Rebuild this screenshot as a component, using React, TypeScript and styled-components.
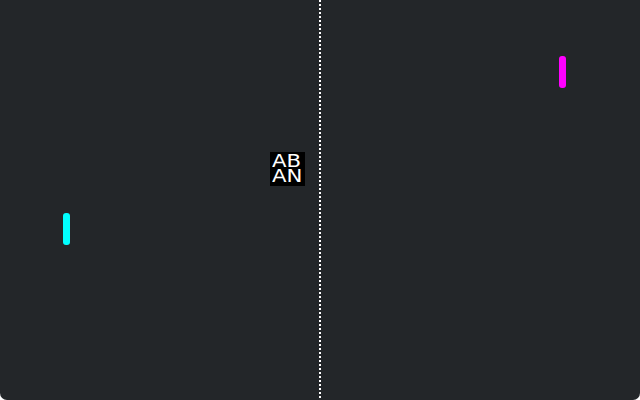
import React from "react";
import styled, { createGlobalStyle } from "styled-components";

const Global = createGlobalStyle`
  html, body { margin: 0; padding: 0; background: #ffffff; }
  body { width: 640px; height: 400px; overflow: hidden; }
`;

const Court = styled.div`
  position: relative;
  width: 640px;
  height: 400px;
  background: #232629;
  border-bottom-left-radius: 7px;
  border-bottom-right-radius: 7px;
  overflow: hidden;
`;

const Net = styled.div`
  position: absolute;
  left: 319px;
  top: 0;
  width: 2px;
  height: 400px;
  background: repeating-linear-gradient(
    to bottom,
    #ffffff 0px,
    #ffffff 2px,
    transparent 2px,
    transparent 4px
  );
`;

const Paddle = styled.div<{ $color: string; $x: number; $y: number }>`
  position: absolute;
  left: ${(p) => p.$x}px;
  top: ${(p) => p.$y}px;
  width: 7px;
  height: 32px;
  border-radius: 3px;
  background: ${(p) => p.$color};
`;

const Logo = styled.div`
  position: absolute;
  left: 270px;
  top: 152px;
  width: 35px;
  height: 34px;
  background: #000000;
  padding: 2px 0 0 2px;
  box-sizing: border-box;
`;

const LogoText = styled.div`
  color: #ffffff;
  font-family: "DejaVu Sans", "Liberation Sans", sans-serif;
  font-size: 17px;
  line-height: 15px;
  white-space: nowrap;
  transform: scale(1.25, 1);
  transform-origin: left top;
`;

export default function App() {
  return (
    <>
      <Global />
      <Court>
        <Net />
        <Paddle $color="#00ffff" $x={63} $y={213} />
        <Paddle $color="#ff00ff" $x={559} $y={56} />
        <Logo>
          <LogoText>
            AB
            <br />
            AN
          </LogoText>
        </Logo>
      </Court>
    </>
  );
}
